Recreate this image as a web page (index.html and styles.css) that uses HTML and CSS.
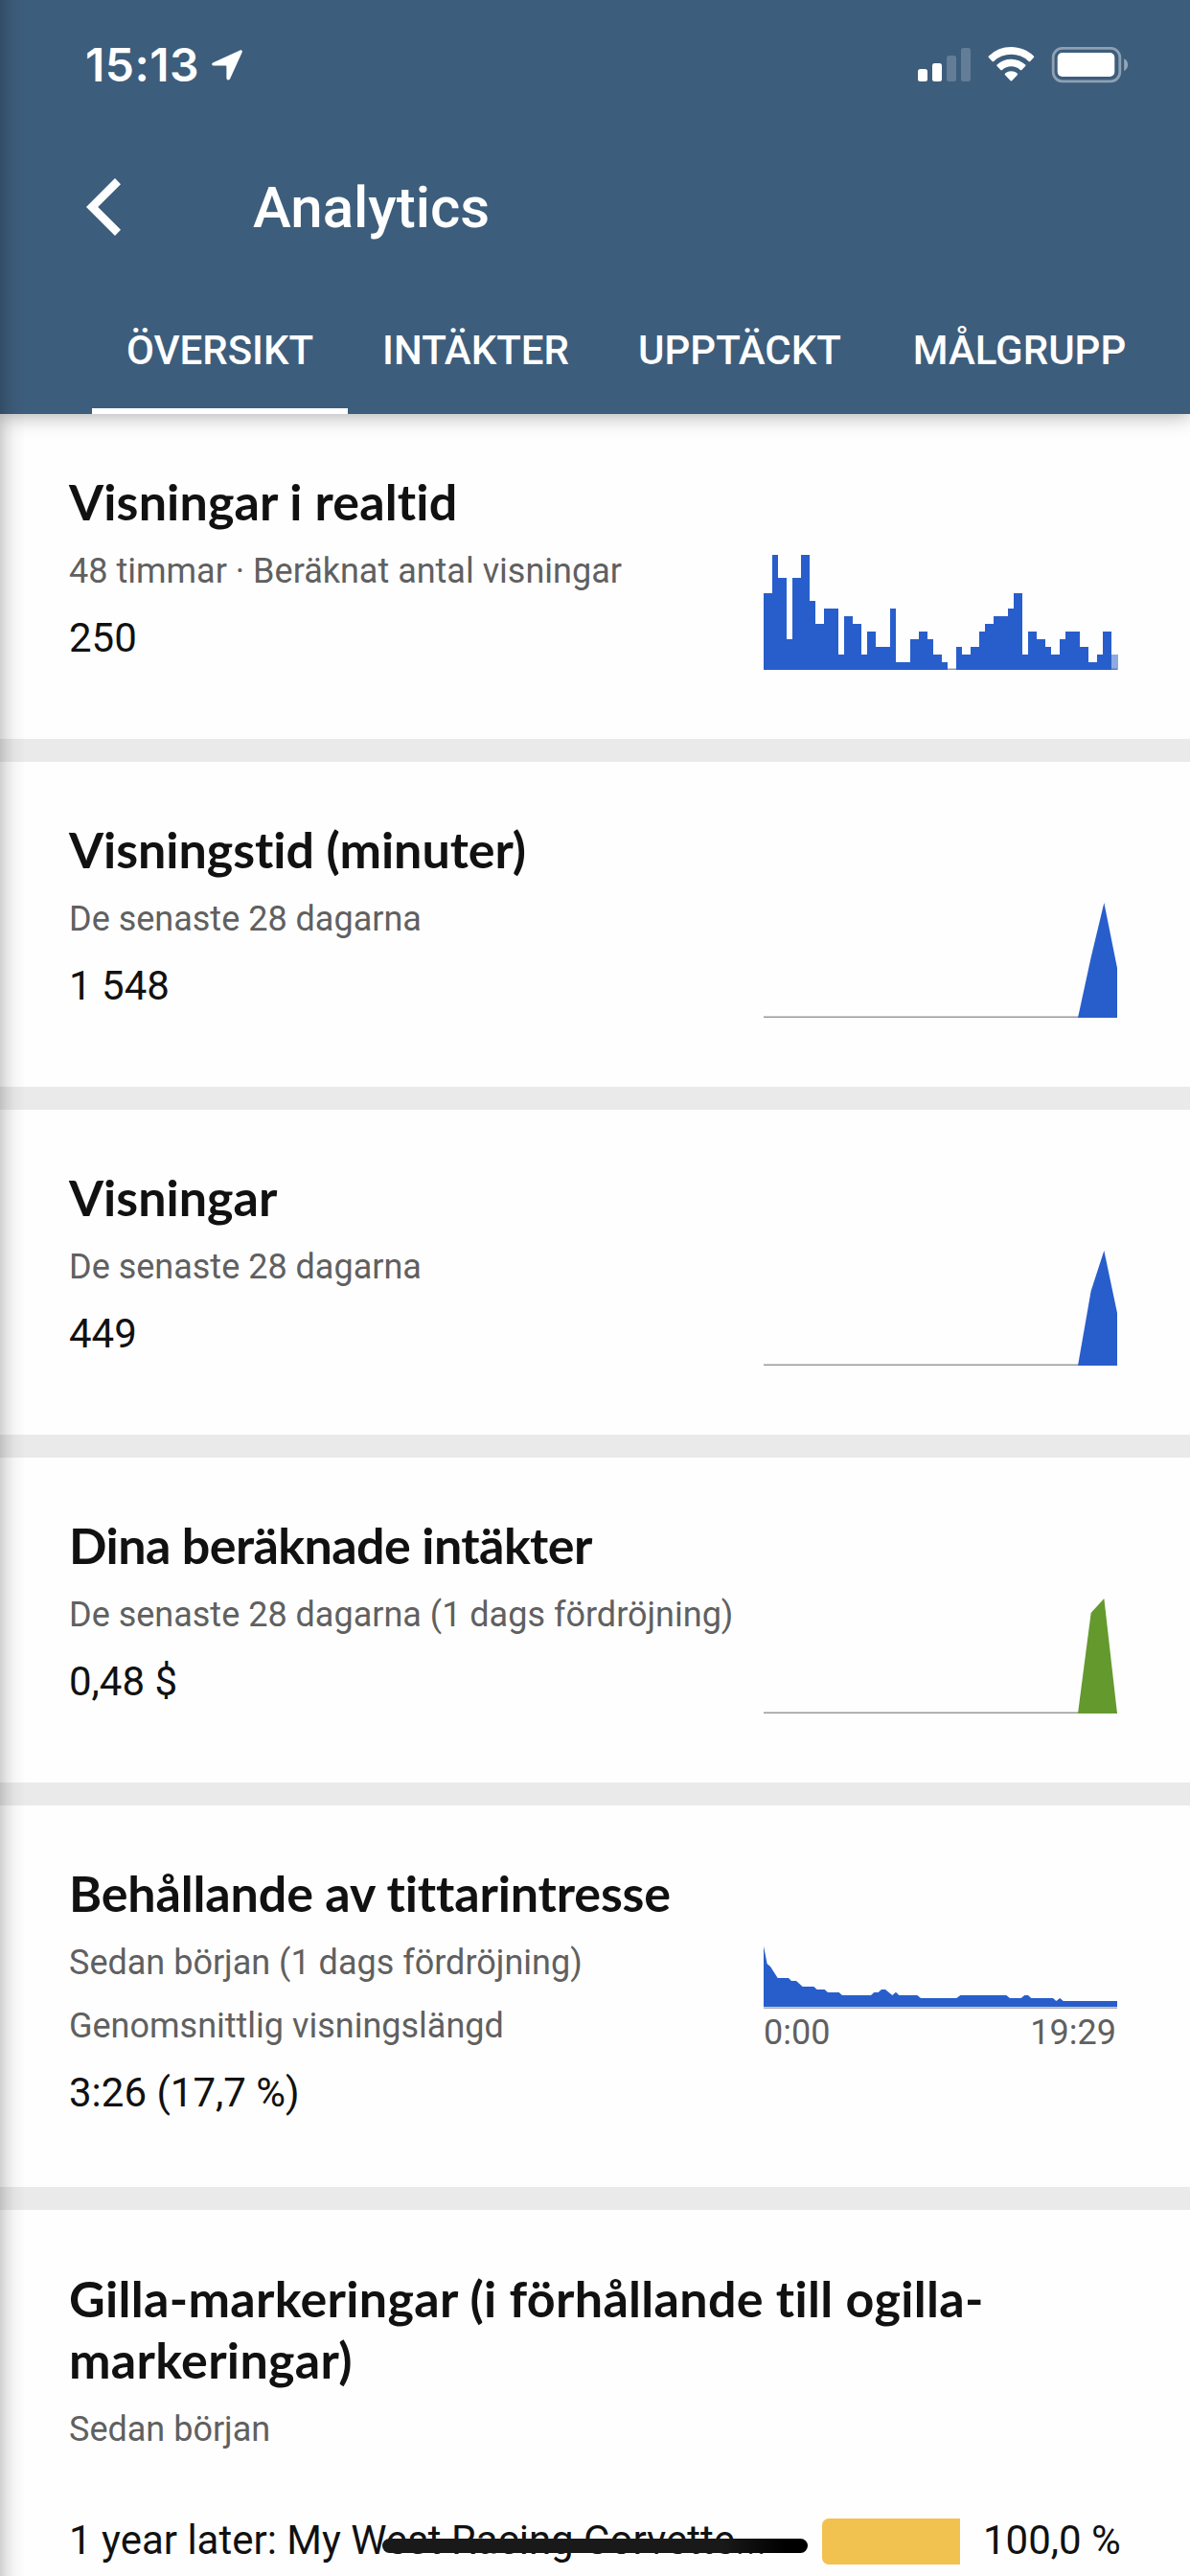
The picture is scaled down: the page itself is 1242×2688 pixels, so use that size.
FILE: index.html
```html
<!DOCTYPE html>
<html lang="sv">
<head>
<meta charset="utf-8">
<title>Analytics</title>
<link rel="stylesheet" href="styles.css">
</head>
<body>
<div class="screen">
  <header class="header">
    <div class="status">
      <span class="time">15:13</span>
      <svg class="location" width="32" height="32" viewBox="0 0 32 32"><path d="M29.5.4 1.6 13.2C-.6 14.3-.2 16.6 2.2 16.6H14.600q.8 0 .8.8V29.200c0 2.600 2.700 3.100 3.800.8L31.700 2.600C32.300 1 31.100-.3 29.500.4Z" fill="#fff"/></svg>
      <svg class="indicators" width="220" height="38" viewBox="958 49 220 38">
        <g fill="#fff">
          <rect x="958" y="72" width="10" height="13" rx="2.500"/>
          <rect x="973" y="66" width="10" height="19" rx="2.500"/>
          <rect x="988" y="58" width="10" height="27" rx="2.500" opacity=".2"/>
          <rect x="1003" y="50" width="10" height="35" rx="2.500" opacity=".2"/>
          <path d="M1055.400 49c9 0 17.300 3.500 23.500 9.400q.8.800 0 1.600l-3.700 3.900q-.8.700-1.600 0a26.500 26.500 0 0 0-36.400 0q-.8.700-1.600 0l-3.700-3.900q-.8-.8 0-1.600a34 34 0 0 1 23.500-9.400Z"/>
          <path d="M1055.400 61.700c5.700 0 10.900 2.200 14.800 5.800q.8.800 0 1.600l-3.800 3.900q-.8.700-1.600 0a14 14 0 0 0-18.800 0q-.8.700-1.600 0l-3.800-3.900q-.8-.8 0-1.600a21.700 21.700 0 0 1 14.800-5.800Z"/>
          <path d="M1055.400 74.300c2.300 0 4.500.8 6.300 2.200q.9.800.1 1.700l-5.700 6q-.7.800-1.400 0l-5.700-6q-.8-.9.1-1.700a10 10 0 0 1 6.300-2.200Z"/>
          <rect x="1103.700" y="55" width="59.600" height="25" rx="5"/>
          <path d="M1173.200 61.200c2.200.8 3.900 3.400 3.900 6.400s-1.700 5.600-3.900 6.400Z" opacity=".45"/>
        </g>
        <rect x="1099.200" y="50.400" width="69.600" height="34.400" rx="9.500" fill="none" stroke="#fff" stroke-width="2.800" opacity=".42"/>
      </svg>
    </div>
    <div class="toolbar">
      <svg class="back" width="36" height="60" viewBox="0 0 36 60"><path d="M30 0 36 6.200 12.200 30 36 53.800 30 60 0 30Z" fill="#fff"/></svg>
      <h1 class="page-title">Analytics</h1>
    </div>
    <nav class="tabs">
      <a class="tab tab-active">ÖVERSIKT</a>
      <a class="tab">INTÄKTER</a>
      <a class="tab tab-wide">UPPTÄCKT</a>
      <a class="tab tab-wider">MÅLGRUPP</a>
    </nav>
  </header>

  <main class="cards">
    <section class="card">
      <div class="info">
        <h2 class="title t1">Visningar i realtid</h2>
        <p class="sub">48 timmar · Beräknat antal visningar</p>
        <p class="value">250</p>
      </div>
      <svg class="chart" width="370" height="120" viewBox="0 0 370 120">
        <path d="M0 118H369V119H0Z" fill="#ccc"/><path d="M0 119H369V120H0Z" fill="#999"/>
        <path fill="#285ecc" d="M0 120V40H9V0H15V24H24V88H30V24H39V0H48V48H54V72H63V56H78V104H84V64H93V72H102V104H108V80H117V96H132V56H138V112H153V88H162V80H171V88H177V104H186V112H192V120H201V96H207V104H216V96H225V80H231V72H240V64H255V56H261V40H270V104H276V80H285V88H294V96H300V104H309V88H315V80H330V96H339V112H348V104H354V80H363V120Z"/>
        <path fill="#285ecc" fill-opacity=".53" d="M363 104H370V120H363Z"/>
      </svg>
    </section>

    <section class="card">
      <div class="info">
        <h2 class="title t2">Visningstid (minuter)</h2>
        <p class="sub">De senaste 28 dagarna</p>
        <p class="value">1 548</p>
      </div>
      <svg class="chart" width="370" height="120" viewBox="0 0 370 120">
        <path d="M0 118H369V119H0Z" fill="#ccc"/><path d="M0 119H369V120H0Z" fill="#999"/>
        <path fill="#285ecc" d="M328 120 341.670 57 355.330 0 369 68V120Z"/>
      </svg>
    </section>

    <section class="card">
      <div class="info">
        <h2 class="title t3">Visningar</h2>
        <p class="sub">De senaste 28 dagarna</p>
        <p class="value">449</p>
      </div>
      <svg class="chart" width="370" height="120" viewBox="0 0 370 120">
        <path d="M0 118H369V119H0Z" fill="#ccc"/><path d="M0 119H369V120H0Z" fill="#999"/>
        <path fill="#285ecc" d="M328 120 341.670 42 355.330 0 369 65V120Z"/>
      </svg>
    </section>

    <section class="card">
      <div class="info">
        <h2 class="title t4">Dina beräknade intäkter</h2>
        <p class="sub">De senaste 28 dagarna (1 dags fördröjning)</p>
        <p class="value">0,48 $</p>
      </div>
      <svg class="chart" width="370" height="120" viewBox="0 0 370 120">
        <path d="M0 118H369V119H0Z" fill="#ccc"/><path d="M0 119H369V120H0Z" fill="#999"/>
        <path fill="#64992e" d="M328 120 341.670 15 355.330 0 369 120Z"/>
      </svg>
    </section>

    <section class="card card-retention">
      <div class="info">
        <h2 class="title t5">Behållande av tittarintresse</h2>
        <p class="sub">Sedan början (1 dags fördröjning)</p>
        <p class="sub">Genomsnittlig visningslängd</p>
        <p class="value">3:26 (17,7 %)</p>
      </div>
      <div class="chart retention">
        <svg width="370" height="66" viewBox="51 60 1110 198">
          <path d="M51 252H1158V255H51Z" fill="#ccc"/><path d="M51 255H1158V258H51Z" fill="#aaa"/>
          <path fill="#285ecc" d="M51 252V62L62 118 72 126 95 162H129L138 171H153L173 189H208L218 198H242L252 207H287L297 216H387L397 207H410L420 198H432L454 216 465 206 475 216H532L543 225H655L667 216H811L822 225H857L868 216H879L889 225H957L967 234 979 225 989 234H1158V252Z"/>
        </svg>
        <div class="range"><span>0:00</span><span>19:29</span></div>
      </div>
    </section>

    <section class="card card-likes">
      <div class="info">
        <h2 class="title t6">Gilla-markeringar (i förhållande till ogilla-<br>markeringar)</h2>
        <p class="sub">Sedan början</p>
        <div class="like-row">
          <span class="video">1 year later: My West Racing Corvette...</span>
          <span class="like-bar"></span>
          <span class="percent">100,0 %</span>
        </div>
      </div>
    </section>
  </main>

  <div class="edge-shadow"></div>
  <div class="home-indicator"></div>
</div>
</body>
</html>
```
FILE: styles.css
```css
* { box-sizing: border-box; }

body {
  margin: 0;
  background: #fefefe;
  font-family: Roboto, sans-serif;
  color: #111;
}

h1, h2, p { margin: 0; font-weight: 400; }
svg { display: block; }

.screen {
  position: relative;
  width: 1242px;
  height: 2688px;
  overflow: hidden;
}

.header {
  position: relative;
  display: flex;
  flex-direction: column;
  height: 432px;
  background: #3d5d7c;
  color: #fff;
  box-shadow: 0 2px 20px rgba(0, 0, 0, .32);
}

.status {
  display: flex;
  align-items: flex-start;
  height: 132px;
  padding: 49px 64px 0 89px;
}
.time {
  width: 132px;
  margin-top: -10px;
  font: 600 48px/58px Inter, sans-serif;
  letter-spacing: .5px;
}
.location { margin-top: 3px; }
.indicators { margin-left: auto; }

.toolbar {
  display: flex;
  align-items: center;
  height: 168px;
  padding-left: 90px;
}
.page-title {
  margin-left: 138px;
  padding-top: 1px;
  font-size: 60px;
  font-weight: 500;
  line-height: 72px;
}

.tabs {
  display: flex;
  height: 132px;
  padding-left: 96px;
}
.tab {
  flex: 0 0 267px;
  border-bottom: 6px solid transparent;
  font-size: 42px;
  font-weight: 500;
  line-height: 132px;
  text-align: center;
}
.tab-active { border-color: #fff; }
.tab-wide { flex-basis: 284px; }
.tab-wider { flex-basis: 300px; }

.cards {
  display: flex;
  flex-direction: column;
  gap: 24px;
  background: #eaeaea;
}
.card {
  display: flex;
  justify-content: space-between;
  height: 339px;
  padding: 59px 75px 0 72px;
  background: #fefefe;
}
.card-retention { height: 398px; }
.card-likes { height: 382px; padding-top: 60px; }

.info { white-space: nowrap; }
.title {
  margin-bottom: 8px;
  font: 700 52px/64px Lato, sans-serif;
  font-variant-ligatures: none;
}
.t1 { letter-spacing: .15px; }
.t2 { letter-spacing: -.05px; }
.t4 { letter-spacing: -.57px; }
.t5 { letter-spacing: -.14px; }
.t6 { letter-spacing: .32px; }
.sub {
  font-size: 36px;
  line-height: 66px;
  color: #606060;
}
.value {
  padding-top: 1px;
  font-size: 42px;
  line-height: 72px;
}

.chart { flex: none; margin-top: 88px; }
.retention { width: 370px; margin-top: 87px; }
.range {
  display: flex;
  justify-content: space-between;
  margin-top: 4px;
  padding-right: 2px;
  font-size: 36px;
  line-height: 42px;
  color: #606060;
}

.card-likes .info { flex: 1; }
.like-row {
  display: flex;
  align-items: center;
  height: 48px;
  margin-top: 60px;
  font-size: 42px;
}
.video { width: 786px; padding-bottom: 4px; }
.like-bar {
  width: 144px;
  height: 48px;
  border-radius: 7px 0 0 7px;
  background: #f1c250;
}
.percent { margin-left: 24px; padding-bottom: 4px; }

.edge-shadow {
  position: absolute;
  inset: 0 auto 0 0;
  width: 27px;
  background: linear-gradient(90deg, rgba(0, 0, 0, .18), rgba(0, 0, 0, .1) 25%, rgba(0, 0, 0, .035) 55%, transparent);
}
.home-indicator {
  position: absolute;
  left: 399px;
  top: 2649px;
  width: 444px;
  height: 15px;
  border-radius: 8px;
  background: linear-gradient(90deg, #191919 80%, #000 95%);
}
```
